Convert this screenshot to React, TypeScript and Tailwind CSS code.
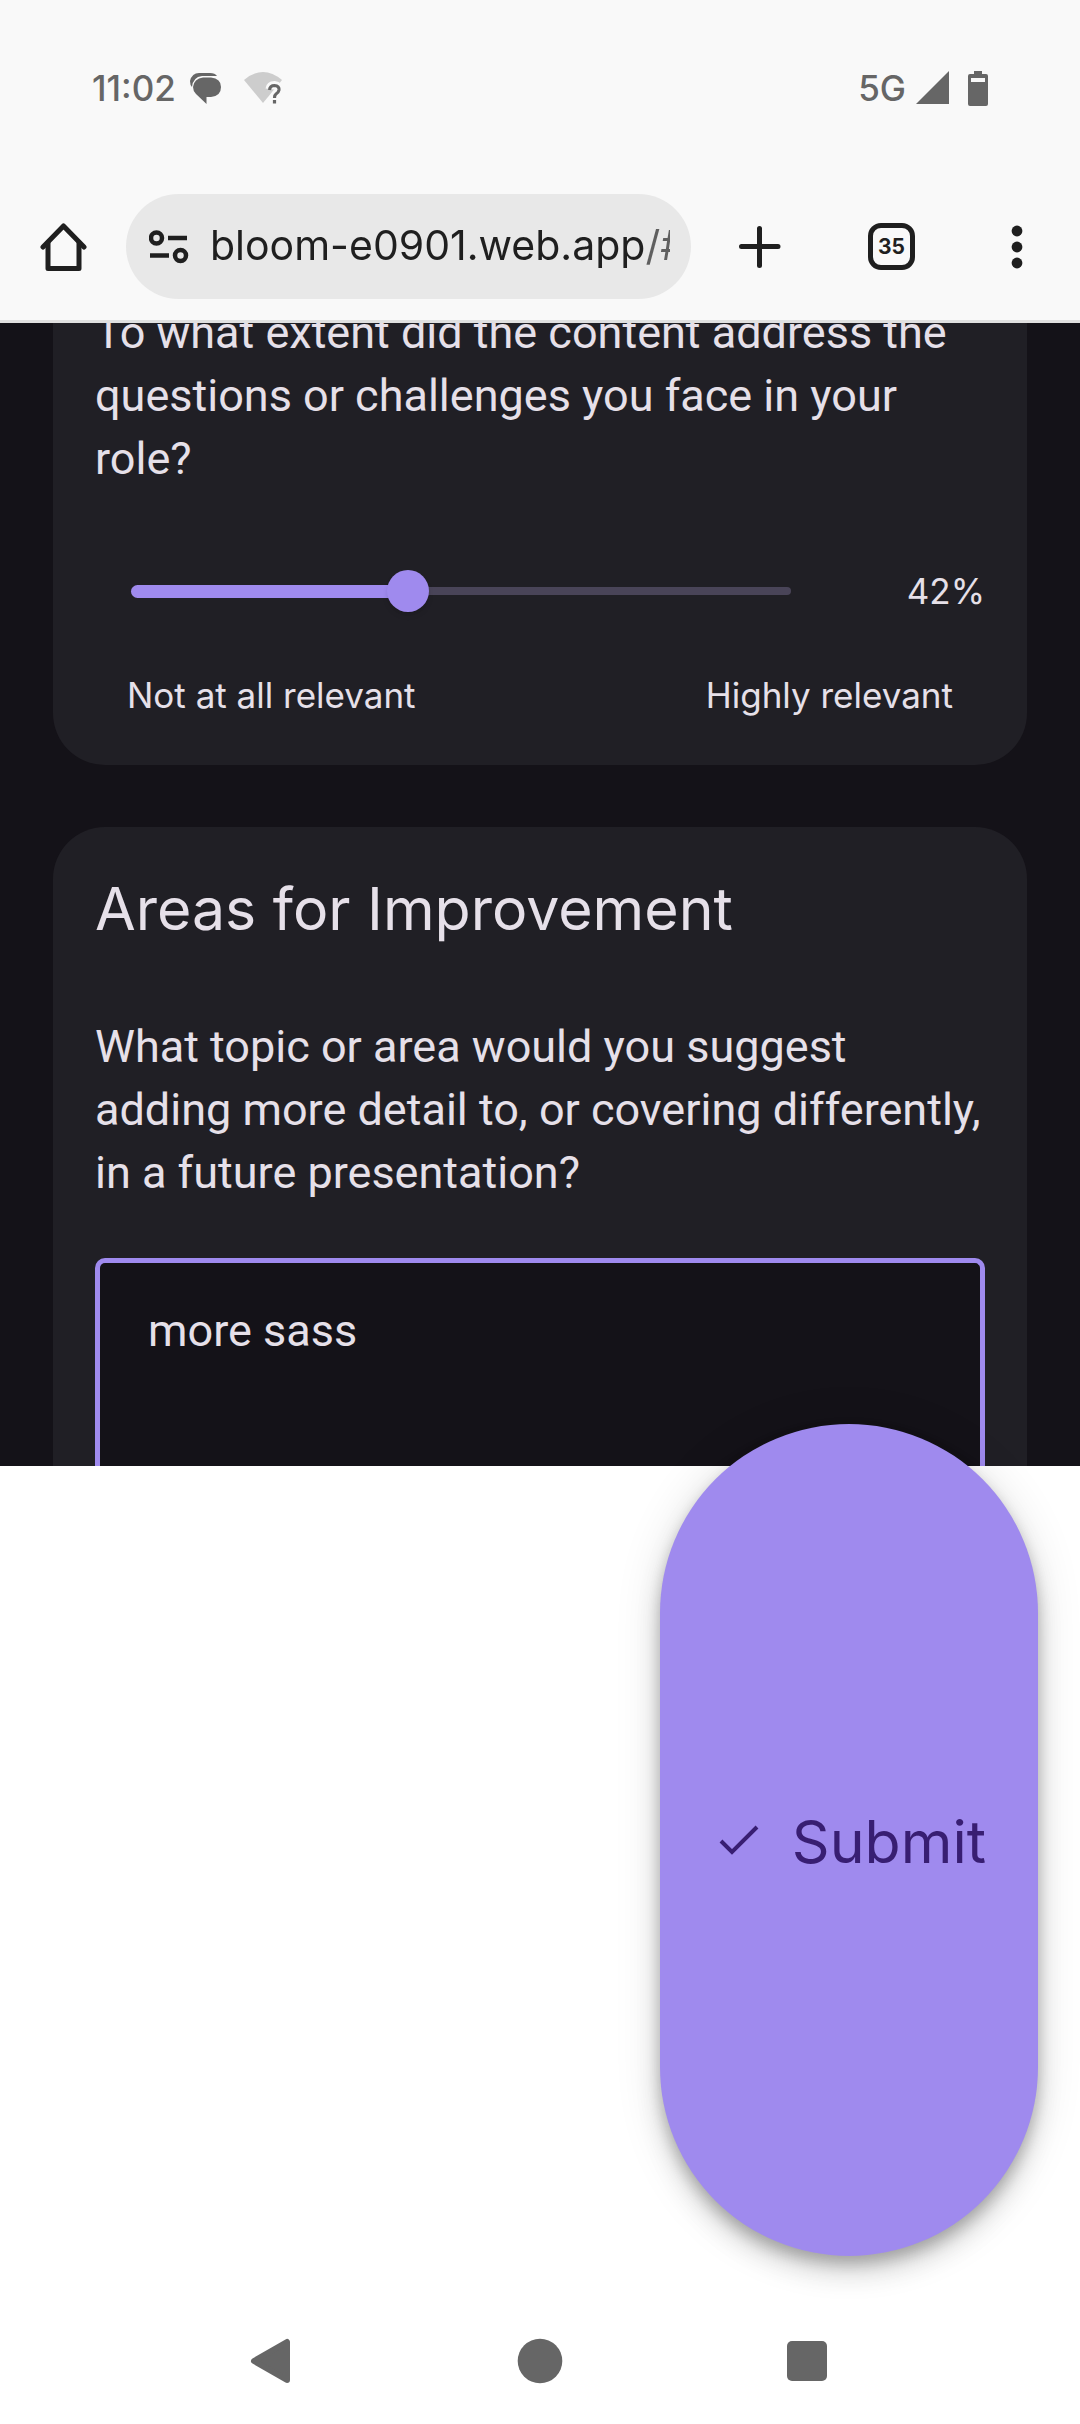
import { useState } from "react";

function StatusBar() {
  return (
    <div className="flex h-16 items-center px-[92px] text-[35px] leading-none font-medium text-[#666666]">
      <span className="w-[86px]">11:02</span>
      <svg className="ml-3 h-[31px] w-[32px]" viewBox="0 0 32 31" fill="#666666" aria-label="Messages">
        <path d="M9 0H20Q25 0 27 3H12Q3 4 2 14Q0 12 0 8Q2 0 9 0Z" />
        <path d="M13 4.500H21Q31 5.500 31 14Q31 23 21 24H16.500V31L6 21Q3 18 3 14Q4 5.500 13 4.500Z" />
      </svg>
      <svg className="ml-[22px] h-[32px] w-[40px]" viewBox="0 0 40 32" aria-label="Wi-Fi, no internet">
        <path d="M0 8Q19 -8 38 8L19 31Z" fill="#cdcdcd" />
        <g fill="none">
          <path d="M25.500 17Q26 13 30.500 13Q35.500 13.500 35 18Q34.500 20.500 32 22Q30.500 23 30.500 26M30.500 28V31.500" stroke="#f9f9f9" strokeWidth="8" />
          <path d="M25.500 18Q26 13.500 30.500 13.500Q35.500 14 35 18Q34.500 20.500 32 22Q30.500 23 30.500 26M30.500 28V31.500" stroke="#666666" strokeWidth="3.200" />
        </g>
      </svg>
      <span className="ml-auto">5G</span>
      <svg className="ml-[10px] h-[34px] w-[34px]" viewBox="0 0 34 34" fill="#666666" aria-label="Signal">
        <path d="M33 0V33H0Z" />
      </svg>
      <svg className="ml-[18px] h-[35px] w-[20px]" viewBox="0 0 20 35" fill="#666666" aria-label="Battery">
        <path fillRule="evenodd" d="M6 0H14V3H18Q20 3 20 5V33Q20 35 18 35H2Q0 35 0 33V5Q0 3 2 3H6ZM3 7V11H17V7Z" />
      </svg>
    </div>
  );
}

function Toolbar() {
  return (
    <div className="flex items-center pr-[57px] pl-10">
      <button type="button" aria-label="Home">
        <svg className="h-[48px] w-[47px]" viewBox="0 0 47 48" fill="none" stroke="#1f1f1f" strokeWidth="5" strokeLinecap="round" strokeLinejoin="round">
          <path d="M3 24L23.500 3L44 24" />
          <path d="M8 20V45.500H39V20" />
        </svg>
      </button>
      <div className="ml-[39px] flex h-[105px] min-w-0 flex-1 items-center rounded-full bg-[#e8e8e8] pr-[21px] pl-[23px]">
        <button type="button" aria-label="Site settings">
          <svg className="h-[34px] w-[40px]" viewBox="0 0 40 34" fill="none" stroke="#1f1f1f" strokeWidth="4.500">
            <circle cx="7.500" cy="8" r="5.500" />
            <path d="M19 8H38" />
            <path d="M1 25.500H20" />
            <circle cx="31.500" cy="25.500" r="5.500" />
          </svg>
        </button>
        <input
          type="text"
          aria-label="Address"
          defaultValue="bloom-e0901.web.app/#/feedback"
          className="ml-[21px] h-[70px] min-w-0 flex-1 overflow-hidden bg-[linear-gradient(to_right,#1f1f1f_434px,#5f5f5f_435px)] bg-clip-text pb-1 text-[41px] text-transparent outline-none"
        />
      </div>
      <button type="button" aria-label="New tab" className="ml-12">
        <svg className="h-[42px] w-[42px]" viewBox="0 0 42 42" fill="none" stroke="#1f1f1f" strokeWidth="5" strokeLinecap="round">
          <path d="M20.500 2.500V39.500M2.500 20.500H39" />
        </svg>
      </button>
      <button
        type="button"
        aria-label="Switch tabs"
        className="ml-[87px] flex h-[47px] w-[47px] items-center justify-center rounded-[13px] border-5 border-[#1f1f1f] text-[21px] leading-none font-bold text-[#1f1f1f]"
      >
        35
      </button>
      <button type="button" aria-label="Menu" className="ml-24">
        <svg className="h-[44px] w-[12px]" viewBox="0 0 12 44" fill="#1f1f1f">
          <circle cx="6" cy="6" r="5.400" />
          <circle cx="6" cy="22" r="5.400" />
          <circle cx="6" cy="38" r="5.400" />
        </svg>
      </button>
    </div>
  );
}

function RelevanceCard() {
  const [value, setValue] = useState(42);
  return (
    <section className="rounded-b-[52px] bg-[#201f25] px-[42px] pb-[50px]">
      <label htmlFor="relevance" className="-mt-[22px] block font-[Roboto,sans-serif] text-[45px] leading-[63px]">
        To what extent did the content address the
        <br />
        questions or challenges you face in your
        <br />
        role?
      </label>
      <div className="mt-20 flex h-[42px] items-center pl-[15px]">
        <div className="relative flex h-[42px] flex-1 items-center px-[21px]">
          <div className="flex h-[8px] flex-1 items-center rounded-full bg-[#494458]">
            <div className="h-[13px] rounded-full bg-[#9f8aee]" style={{ width: `${value}%` }} />
          </div>
          <input
            id="relevance"
            type="range"
            min={0}
            max={100}
            value={value}
            onChange={(e) => setValue(Number(e.target.value))}
            className="absolute inset-0 w-full appearance-none bg-transparent outline-none [&::-webkit-slider-thumb]:h-[42px] [&::-webkit-slider-thumb]:w-[42px] [&::-webkit-slider-thumb]:appearance-none [&::-webkit-slider-thumb]:rounded-full [&::-webkit-slider-thumb]:bg-[#9f8aee] [&::-webkit-slider-thumb]:shadow-md"
          />
        </div>
        <output htmlFor="relevance" className="w-[173px] text-right text-[35px] leading-10">
          {value}%
        </output>
      </div>
      <div className="mt-[63px] flex justify-between px-8 text-[35px] leading-10">
        <span>Not at all relevant</span>
        <span>Highly relevant</span>
      </div>
    </section>
  );
}

function ImprovementCard() {
  return (
    <section className="mt-[62px] rounded-t-[52px] bg-[#201f25] px-[42px] pt-[46px]">
      <h2 className="text-[59px] leading-[72px]">Areas for Improvement</h2>
      <label htmlFor="improvement" className="mt-[70px] block font-[Roboto,sans-serif] text-[45px] leading-[63px]">
        What topic or area would you suggest
        <br />
        adding more detail to, or covering differently,
        <br />
        in a future presentation?
      </label>
      <textarea
        id="improvement"
        defaultValue="more sass"
        className="mt-[54px] block h-[208px] w-full resize-none rounded-t-[10px] border-5 border-b-0 border-[#9f8aee] bg-[#141218] px-12 pt-9 font-[Roboto,sans-serif] text-[45px] leading-[63px] outline-none"
      />
    </section>
  );
}

function NavigationBar() {
  return (
    <nav className="mt-auto flex h-[126px] items-center justify-center gap-[220px]">
      <button type="button" aria-label="Back">
        <svg className="h-12 w-12" viewBox="0 0 48 48" fill="#666666" stroke="#666666" strokeWidth="6" strokeLinejoin="round">
          <path d="M6 24L39 5V43Z" />
        </svg>
      </button>
      <button type="button" aria-label="Home screen">
        <svg className="h-12 w-12" viewBox="0 0 48 48" fill="#666666">
          <circle cx="24" cy="24" r="22.300" />
        </svg>
      </button>
      <button type="button" aria-label="Recent apps">
        <svg className="h-12 w-12" viewBox="0 0 48 48" fill="#666666">
          <rect x="3" y="4" width="40" height="40" rx="5" />
        </svg>
      </button>
    </nav>
  );
}

export default function App() {
  return (
    <div className="relative flex min-h-screen flex-col bg-white font-[Inter,sans-serif]">
      <header className="flex flex-col gap-[74px] border-b-3 border-[#e0e0e0] bg-[#f9f9f9] pt-14 pb-[21px]">
        <StatusBar />
        <Toolbar />
      </header>
      <main className="overflow-hidden bg-[#141218] px-[53px] text-[#e6e0e9]">
        <RelevanceCard />
        <ImprovementCard />
      </main>
      <button
        type="submit"
        className="absolute right-[42px] bottom-[168px] flex h-[832px] items-center gap-6 rounded-full bg-[#9f8aee] pt-1 pr-[52px] pl-[50px] text-[59px] text-[#381e72] shadow-[0_8px_13px_rgba(0,0,0,0.2),0_16px_26px_rgba(0,0,0,0.14),0_3px_47px_rgba(0,0,0,0.12)]"
      >
        <svg className="h-[58px] w-[58px]" viewBox="0 0 58 58" fill="none" stroke="#381e72" strokeWidth="4">
          <path d="M11 28L22 39L47 14" />
        </svg>
        Submit
      </button>
      <NavigationBar />
    </div>
  );
}
